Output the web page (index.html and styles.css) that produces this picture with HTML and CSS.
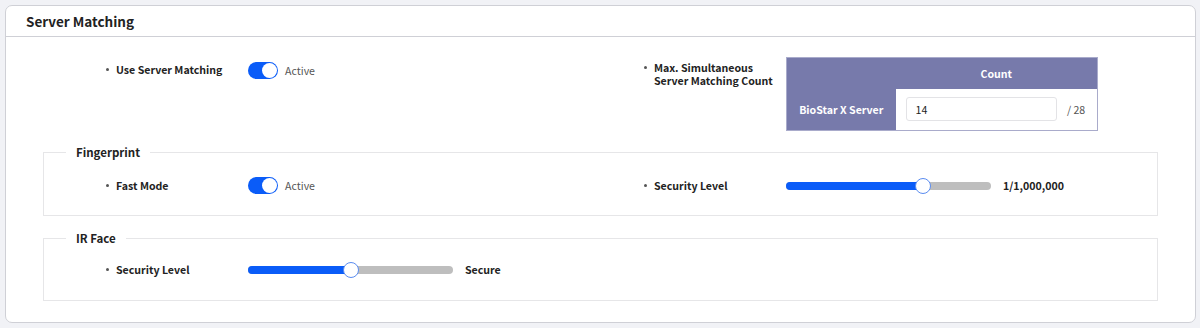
FILE: index.html
```html
<!DOCTYPE html>
<html lang="en">
<head>
    <meta charset="UTF-8">
    <title>Server Matching</title>
    <link rel="stylesheet" href="styles.css">
</head>
<body>
    <div class="card">
        <div class="card-head">Server Matching</div>
        <div class="card-body">
            <div class="row top-row">
                <div class="field">
                    <div class="label">Use Server Matching</div>
                    <div class="toggle-wrap">
                        <span class="toggle on"></span>
                        <span class="toggle-text">Active</span>
                    </div>
                </div>
                <div class="field">
                    <div class="label label-two">Max. Simultaneous<br>Server Matching Count</div>
                    <table class="count-table">
                        <tr>
                            <th class="corner"></th>
                            <th>Count</th>
                        </tr>
                        <tr>
                            <th class="row-head">BioStar X Server</th>
                            <td class="count-cell">
                                <input class="count-input" type="text" value="14">
                                <span class="count-max">/ 28</span>
                            </td>
                        </tr>
                    </table>
                </div>
            </div>

            <fieldset class="group">
                <legend>Fingerprint</legend>
                <div class="row">
                    <div class="field">
                        <div class="label">Fast Mode</div>
                        <div class="toggle-wrap">
                            <span class="toggle on"></span>
                            <span class="toggle-text">Active</span>
                        </div>
                    </div>
                    <div class="field">
                        <div class="label">Security Level</div>
                        <div class="slider-wrap">
                            <div class="slider">
                                <div class="slider-fill" style="width: 67%"></div>
                                <div class="slider-thumb" style="left: 67%"></div>
                            </div>
                            <span class="slider-value">1/1,000,000</span>
                        </div>
                    </div>
                </div>
            </fieldset>

            <fieldset class="group group-face">
                <legend>IR Face</legend>
                <div class="row">
                    <div class="field">
                        <div class="label">Security Level</div>
                        <div class="slider-wrap">
                            <div class="slider">
                                <div class="slider-fill" style="width: 50%"></div>
                                <div class="slider-thumb" style="left: 50%"></div>
                            </div>
                            <span class="slider-value">Secure</span>
                        </div>
                    </div>
                </div>
            </fieldset>
        </div>
    </div>
</body>
</html>
```

FILE: styles.css
```css
*{
    box-sizing: border-box;
    margin: 0;
    padding: 0;
}
body{
    background-color: #f1f2f6;
    font-family: "Noto Sans CJK KR", "Noto Sans", sans-serif;
    color: #222;
    padding: 5px 0 0 5px;
}
.card{
    width: 1191px;
    height: 318px;
    background-color: #fff;
    border: 1px solid #cfd0d6;
    border-radius: 7px;
}
.card-head{
    height: 31px;
    padding-left: 20px;
    border-bottom: 1px solid #cfd0d6;
    font-size: 13.5px;
    font-weight: 700;
    line-height: 30px;
}
.card-body{
    padding: 20px 37px 0 37px;
}

/* 두 칸짜리 행 */
.row{
    display: grid;
    grid-template-columns: 538px 1fr;
    padding-left: 63px;
}
.group .row{
    padding-left: 62px;
}
.field{
    display: flex;
    align-items: center;
    height: 17px;
}
.top-row .field{
    align-items: flex-start;
    height: auto;
}
.label{
    position: relative;
    width: 142px;
    padding-left: 10px;
    font-size: 10.6px;
    font-weight: 700;
    line-height: 13.5px;
}
.label::before{
    content: '';
    position: absolute;
    left: 0;
    top: 5px;
    width: 3px;
    height: 3px;
    border-radius: 50%;
    background-color: #555;
}
.top-row .label{
    margin-top: 6px;
}
.top-row .label-two{
    margin-top: 4px;
    line-height: 13px;
}

/* 토글 */
.toggle-wrap{
    display: flex;
    align-items: center;
    gap: 7px;
}
.top-row .toggle-wrap{
    margin-top: 5px;
}
.toggle{
    position: relative;
    width: 30px;
    height: 17px;
    border-radius: 9px;
    background-color: #bdbdbd;
}
.toggle.on{
    background-color: #0a5cf8;
}
.toggle::after{
    content: '';
    position: absolute;
    top: 1px;
    left: 1px;
    width: 15px;
    height: 15px;
    border-radius: 50%;
    background-color: #fff;
}
.toggle.on::after{
    left: 14px;
}
.toggle-text{
    font-size: 10.6px;
    color: #555;
}

/* 카운트 표 */
.count-table{
    border-collapse: collapse;
    border: 1px solid #a9abcb;
    background-color: #777aab;
    color: #fff;
    font-size: 10.6px;
}
.count-table th{
    font-weight: 700;
    height: 31px;
}
.count-table .corner{
    width: 109px;
}
.count-table .row-head{
    height: 42px;
}
.count-cell{
    width: 202px;
    background-color: #fff;
    padding: 0 10px;
    color: #555;
}
.count-input{
    width: 151px;
    height: 24px;
    border: 1px solid #e3e3e6;
    border-radius: 3px;
    padding-left: 9px;
    font-family: inherit;
    font-size: 10.6px;
    color: #222;
    vertical-align: middle;
}
.count-max{
    margin-left: 8px;
    vertical-align: middle;
}

/* 그룹 박스 */
.group{
    border: 1px solid #e6e6e8;
    margin-top: 13px;
    padding: 17px 0 21px 0;
}
.group-face{
    margin-top: 14px;
    padding: 15px 0 22px 0;
}
.group legend{
    margin-left: 22px;
    padding: 0 10px;
    font-size: 11.5px;
    font-weight: 700;
    line-height: 16px;
}

/* 슬라이더 */
.slider-wrap{
    display: flex;
    align-items: center;
    gap: 12px;
}
.slider{
    position: relative;
    width: 205px;
    height: 8px;
    border-radius: 4px;
    background-color: #bebebe;
}
.slider-fill{
    height: 100%;
    border-radius: 4px 0 0 4px;
    background-color: #0a5cf8;
}
.slider-thumb{
    position: absolute;
    top: -4px;
    width: 16px;
    height: 16px;
    margin-left: -8px;
    border-radius: 50%;
    background-color: #fff;
    border: 1.5px solid #5a8cf0;
}
.slider-value{
    font-size: 10.6px;
    font-weight: 700;
}
```
